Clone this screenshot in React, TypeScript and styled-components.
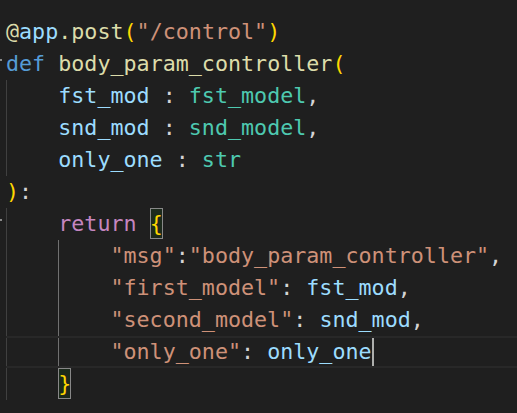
import React from "react";
import styled, { createGlobalStyle } from "styled-components";

const Global = createGlobalStyle`
  html, body { margin: 0; padding: 0; background: #1f1f1f; }
  body { width: 517px; height: 413px; overflow: hidden; }
`;

const Editor = styled.div`
  background: #1f1f1f;
  width: 517px;
  height: 413px;
  padding-top: 16px;
  box-sizing: border-box;
  display: flex;
  flex-direction: column;
  font-family: "DejaVu Sans Mono", "Liberation Mono", monospace;
  font-size: 21.7px;
  color: #d4d4d4;
`;

const Row = styled.div`
  display: flex;
  height: 32px;
`;

const Gutter = styled.div`
  width: 6px;
  flex: none;
  position: relative;
`;

const FoldMark = styled.span`
  position: absolute;
  left: 0;
  top: 11px;
  width: 2px;
  height: 2px;
  background: #8a8a8a;
`;

const Code = styled.div<{ $current?: boolean }>`
  flex: 1;
  display: flex;
  align-items: stretch;
  line-height: 32px;
  white-space: pre;
  box-sizing: border-box;
  ${(p) =>
    p.$current
      ? `border-top: 2px solid #282828; border-bottom: 2px solid #282828; line-height: 28px;`
      : ""}
`;

const Indent = styled.span<{ $active?: boolean }>`
  display: inline-block;
  width: 4ch;
  flex: none;
  box-sizing: border-box;
  border-left: 1px solid ${(p) => (p.$active ? "#707070" : "#404040")};
`;

const Tok = styled.span<{ $c: string }>`
  color: ${(p) => p.$c};
`;

const Bracket = styled.span`
  color: #ffd700;
  background: #1c2a1c;
  box-shadow: inset 0 0 0 1px #888888;
  margin: 0 0 1px 0;
`;

const Cursor = styled.span`
  display: inline-block;
  width: 2px;
  background: #aeafad;
`;

const Y = "#dcdcaa";
const B = "#9cdcfe";
const G = "#ffd700";
const S = "#ce9178";
const K = "#569cd6";
const T = "#4ec9b0";
const P = "#d4d4d4";
const R = "#c586c0";

type T = [string, string];

export default function App() {
  return (
    <>
      <Global />
      <Editor>
        <Row>
          <Gutter />
          <Code>
            <Tok $c={Y}>@</Tok>
            <Tok $c={B}>app</Tok>
            <Tok $c={Y}>.post</Tok>
            <Tok $c={G}>(</Tok>
            <Tok $c={S}>"/control"</Tok>
            <Tok $c={G}>)</Tok>
          </Code>
        </Row>
        <Row>
          <Gutter>
            <FoldMark />
          </Gutter>
          <Code>
            <Tok $c={K}>def</Tok>
            <Tok $c={P}> </Tok>
            <Tok $c={Y}>body_param_controller</Tok>
            <Tok $c={G}>(</Tok>
          </Code>
        </Row>
        {[
          ["fst_mod", "fst_model", ","],
          ["snd_mod", "snd_model", ","],
          ["only_one", "str", ""],
        ].map(([a, b, c]) => (
          <Row key={a}>
            <Gutter />
            <Code>
              <Indent />
              <Tok $c={B}>{a}</Tok>
              <Tok $c={P}> : </Tok>
              <Tok $c={T}>{b}</Tok>
              <Tok $c={P}>{c}</Tok>
            </Code>
          </Row>
        ))}
        <Row>
          <Gutter />
          <Code>
            <Tok $c={G}>)</Tok>
            <Tok $c={P}>:</Tok>
          </Code>
        </Row>
        <Row>
          <Gutter>
            <FoldMark />
          </Gutter>
          <Code>
            <Indent />
            <Tok $c={R}>return</Tok>
            <Tok $c={P}> </Tok>
            <Bracket>{"{"}</Bracket>
          </Code>
        </Row>
        <Row>
          <Gutter />
          <Code>
            <Indent />
            <Indent $active />
            <Tok $c={S}>"msg"</Tok>
            <Tok $c={P}>:</Tok>
            <Tok $c={S}>"body_param_controller"</Tok>
            <Tok $c={P}>,</Tok>
          </Code>
        </Row>
        <Row>
          <Gutter />
          <Code>
            <Indent />
            <Indent $active />
            <Tok $c={S}>"first_model"</Tok>
            <Tok $c={P}>: </Tok>
            <Tok $c={B}>fst_mod</Tok>
            <Tok $c={P}>,</Tok>
          </Code>
        </Row>
        <Row>
          <Gutter />
          <Code>
            <Indent />
            <Indent $active />
            <Tok $c={S}>"second_model"</Tok>
            <Tok $c={P}>: </Tok>
            <Tok $c={B}>snd_mod</Tok>
            <Tok $c={P}>,</Tok>
          </Code>
        </Row>
        <Row>
          <Gutter />
          <Code $current>
            <Indent />
            <Indent $active />
            <Tok $c={S}>"only_one"</Tok>
            <Tok $c={P}>: </Tok>
            <Tok $c={B}>only_one</Tok>
            <Cursor />
          </Code>
        </Row>
        <Row>
          <Gutter />
          <Code>
            <Indent />
            <Bracket>{"}"}</Bracket>
          </Code>
        </Row>
      </Editor>
    </>
  );
}
